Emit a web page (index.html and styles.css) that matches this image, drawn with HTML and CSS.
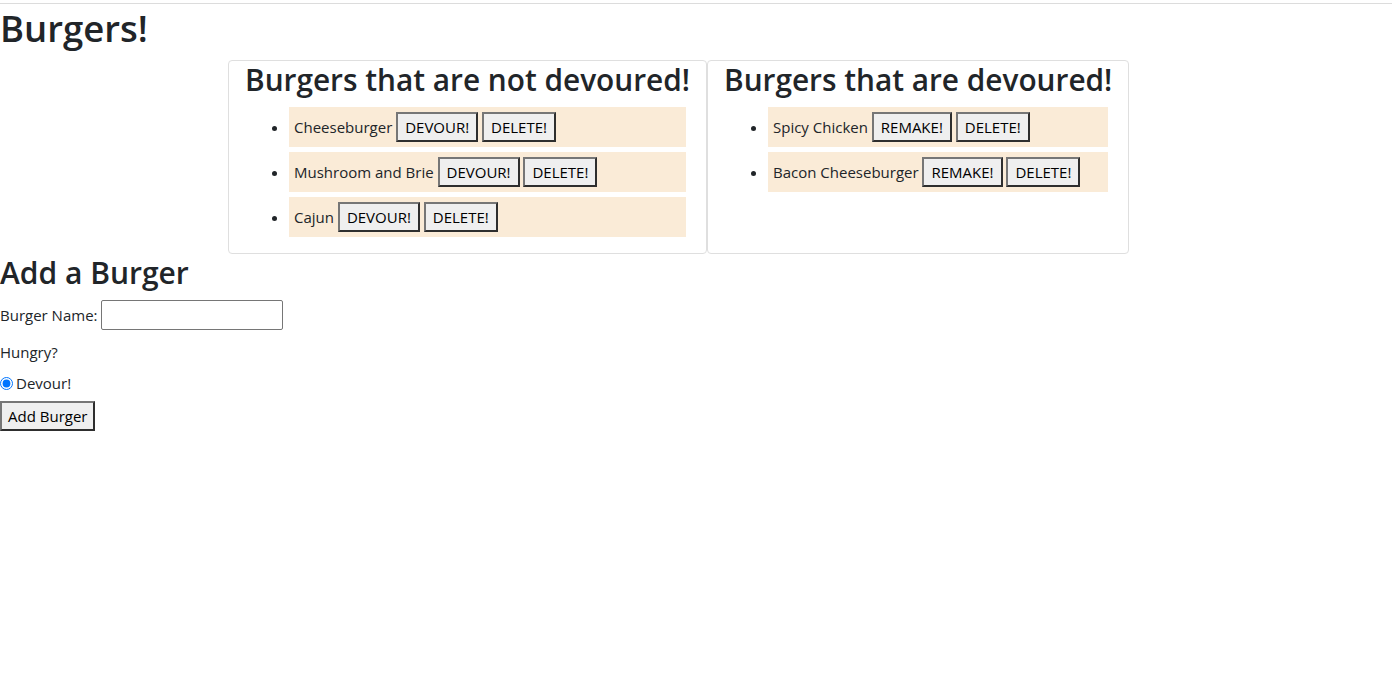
FILE: index.html
```html
<!DOCTYPE html>
<html lang="en">
<head>
<meta charset="utf-8">
<title>Burgers!</title>
<link rel="stylesheet" href="styles.css">
</head>
<body>
<div class="topline"></div>
<h1 class="title">Burgers!</h1>
<div class="lists">
  <div class="card">
    <h2 class="card-title">Burgers that are not devoured!</h2>
    <ul class="burgers">
      <li class="burger">Cheeseburger <button class="btn">DEVOUR!</button> <button class="btn">DELETE!</button></li>
      <li class="burger">Mushroom and Brie <button class="btn">DEVOUR!</button> <button class="btn">DELETE!</button></li>
      <li class="burger">Cajun <button class="btn">DEVOUR!</button> <button class="btn">DELETE!</button></li>
    </ul>
  </div>
  <div class="card">
    <h2 class="card-title">Burgers that are devoured!</h2>
    <ul class="burgers">
      <li class="burger">Spicy Chicken <button class="btn">REMAKE!</button> <button class="btn">DELETE!</button></li>
      <li class="burger">Bacon Cheeseburger <button class="btn">REMAKE!</button> <button class="btn">DELETE!</button></li>
    </ul>
  </div>
</div>
<h2 class="add-title">Add a Burger</h2>
<form class="add-form">
  <div class="row-name"><label for="bn">Burger Name:</label> <input id="bn" class="text-input" type="text"></div>
  <div class="row-hungry">Hungry?</div>
  <div class="row-radio"><input id="dv" class="radio" type="radio" name="devoured" checked><label for="dv">Devour!</label></div>
  <button type="button" class="btn add-btn">Add Burger</button>
</form>
</body>
</html>
```

FILE: styles.css
```css
html, body {
  margin: 0;
  padding: 0;
  background: #fff;
}
body {
  font-family: "Open Sans", "Noto Sans", sans-serif;
  font-size: 15px;
  line-height: 1.5;
  color: #212529;
}
.topline {
  margin-top: 3px;
  border-top: 1px solid #dcdcdc;
}
.title {
  margin: 0 0 8px 0;
  font-size: 36.5px;
  font-weight: 600;
  line-height: 48px;
}
.lists {
  display: flex;
  align-items: stretch;
  margin-left: 228px;
}
.card {
  border: 1px solid #dfdfdf;
  border-radius: 4px;
  padding: 0 16px;
}
.card-title {
  margin: 0 0 8px 0;
  font-size: 29.8px;
  font-weight: 600;
  line-height: 38px;
  white-space: nowrap;
}
.burgers {
  margin: 0 4px 16px 4px;
  padding-left: 40px;
}
.burger {
  background: #faebd7;
  padding: 5px;
  height: 30px;
  line-height: 30px;
  margin-bottom: 5px;
}
.burger:last-child {
  margin-bottom: 0;
}
.btn {
  font-family: inherit;
  font-size: 15px;
  line-height: 24px;
  color: #000;
  background: #efefef;
  border-style: solid;
  border-width: 2px;
  border-color: #767676 #2e2e2e #2e2e2e #767676;
  border-radius: 0;
  padding: 1px 7px;
  margin: 0;
  vertical-align: top;
}
.add-title {
  margin: 0 0 8px 0;
  font-size: 30px;
  font-weight: 600;
  line-height: 38px;
}
.add-form {
  margin: 0;
}
.row-name {
  height: 30px;
  display: flex;
  align-items: center;
  gap: 3px;
}
.text-input {
  width: 182px;
  height: 30px;
  box-sizing: border-box;
  border: 1px solid #767676;
  border-radius: 2px;
  padding: 1px 2px;
  font-family: inherit;
  font-size: 15px;
  margin: 0;
}
.row-hungry {
  margin-top: 10px;
  line-height: 24px;
}
.row-radio {
  margin-top: 7px;
  line-height: 24px;
  display: flex;
  align-items: center;
}
.radio {
  margin: 0 3px 0 0;
  width: 13px;
  height: 13px;
  accent-color: #0075ff;
}
.add-btn {
  margin-top: 6px;
  padding: 1px 6px;
  display: block;
}
```
